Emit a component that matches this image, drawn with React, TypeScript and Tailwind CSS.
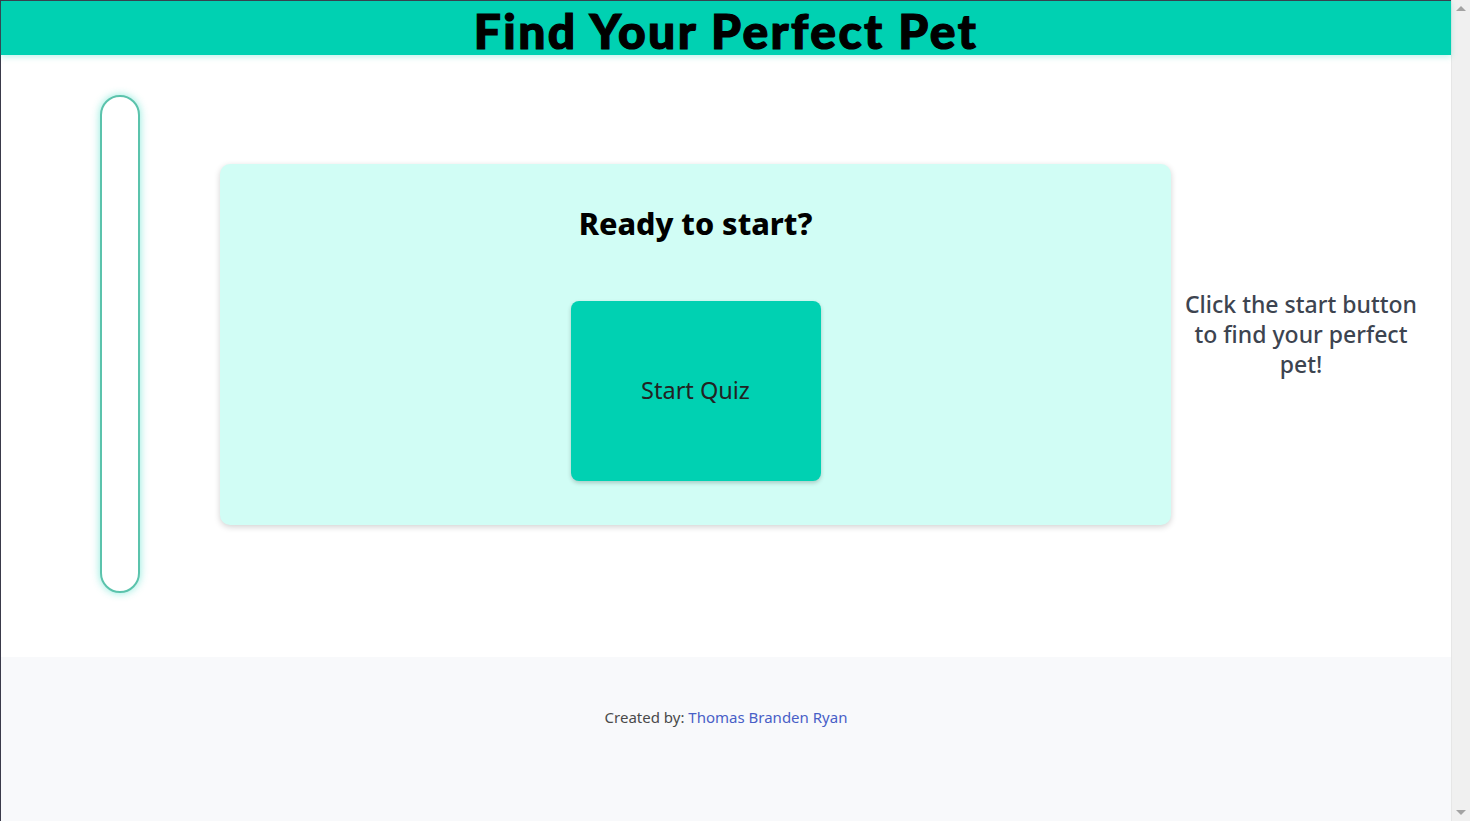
import React from 'react';

const App: React.FC = () => {
  return (
    <div className="flex h-screen w-full overflow-hidden bg-white" style={{ fontFamily: '"Noto Sans", "Open Sans", sans-serif' }}>
      <div className="flex-1 flex flex-col border-l border-t border-[#3a3a4a] min-w-0">
        <header className="h-[54px] bg-[#00d1b2] flex items-start justify-center shadow-[0_2px_6px_rgba(0,209,178,0.25)] relative z-10 overflow-visible">
          <h1 className="text-[48px] leading-none font-black text-black mt-[6px] tracking-[2.4px] [-webkit-text-stroke:1.2px_black]" style={{ fontFamily: 'Lato, "Noto Sans", sans-serif' }}>
            Find Your Perfect Pet
          </h1>
        </header>

        <main className="flex items-center pt-[40px] pb-[64px]">
          <div className="ml-[99px] w-[40px] h-[498px] shrink-0 rounded-full border-2 border-[#5bc3ac] bg-white shadow-[0_0_8px_rgba(0,209,178,0.45)]" />
          <div className="ml-[80px] w-[951px] h-[361px] shrink-0 rounded-[10px] bg-[#d1fdf5] shadow-[0_2px_6px_rgba(0,0,0,0.18)] flex flex-col items-center">
            <h2 className="mt-[39px] text-[30.5px] font-extrabold text-black leading-[40px]">Ready to start?</h2>
            <button className="mt-[58px] w-[250px] h-[180px] rounded-[8px] bg-[#00d1b2] text-[23.5px] text-[#222] shadow-[0_2px_4px_rgba(0,0,0,0.2)]">
              Start Quiz
            </button>
          </div>
          <p className="ml-[4px] w-[252px] text-center text-[23px] leading-[30px] font-medium text-[#3d4450] -mt-[20px]">
            Click the start button to find your perfect pet!
          </p>
        </main>

        <footer className="flex-1 bg-[#f8f9fb] flex justify-center pt-[49px]">
          <p className="text-[15px] text-[#4a4a4a] leading-[22px]">
            Created by: <a className="text-[#485fc7]">Thomas Branden Ryan</a>
          </p>
        </footer>
      </div>

      <div className="w-[19px] shrink-0 bg-[#f0f0f0] border-l border-[#e6e6e6] flex flex-col justify-between items-center py-[6px]">
        <span className="w-0 h-0 border-l-[5px] border-r-[5px] border-b-[5px] border-l-transparent border-r-transparent border-b-[#a3a3a3]" />
        <span className="w-0 h-0 border-l-[5px] border-r-[5px] border-t-[5px] border-l-transparent border-r-transparent border-t-[#a3a3a3]" />
      </div>
    </div>
  );
};

export default App;
